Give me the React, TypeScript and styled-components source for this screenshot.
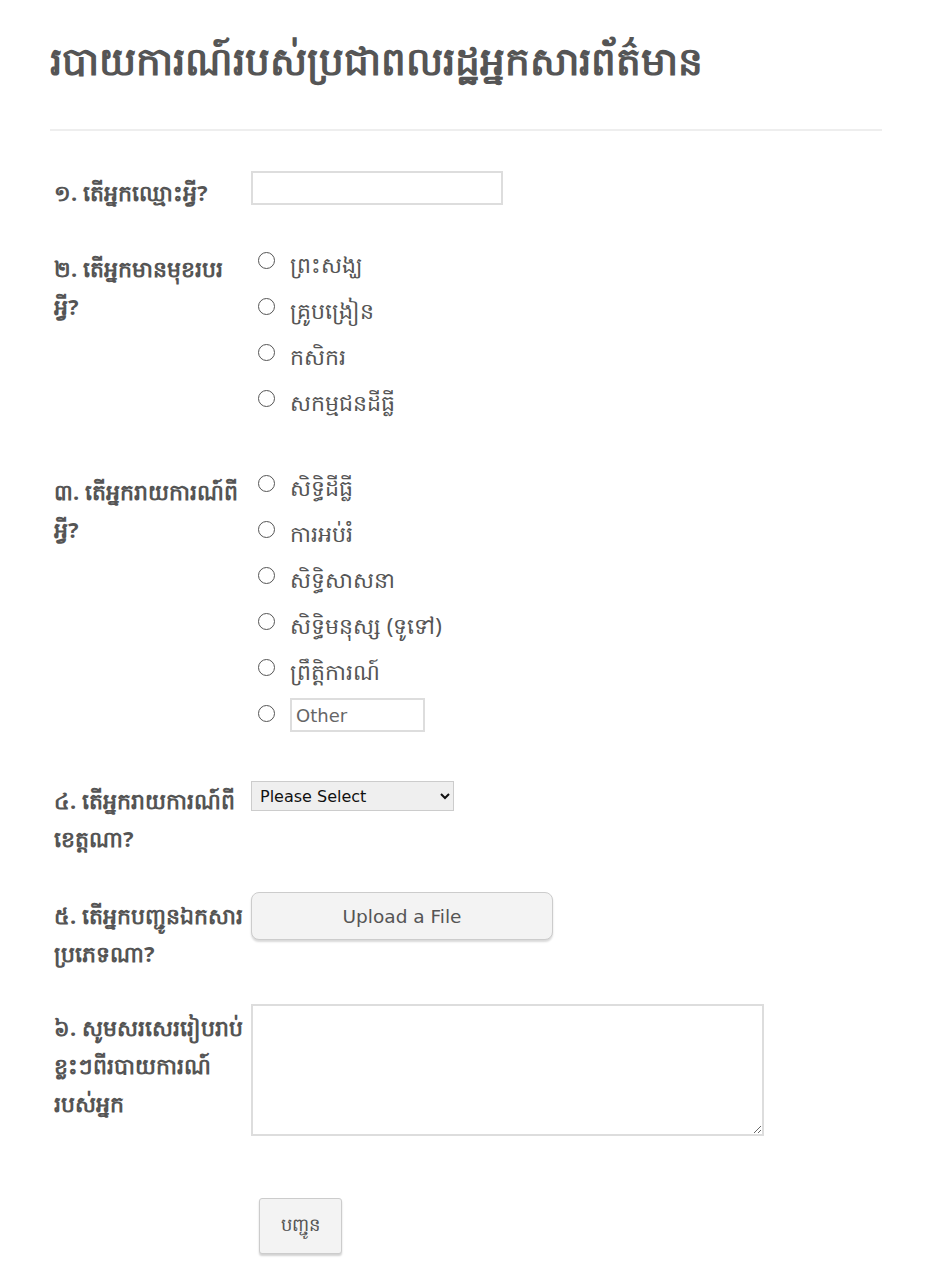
import React from "react";
import styled, { createGlobalStyle } from "styled-components";

const Global = createGlobalStyle`
  html, body { margin: 0; padding: 0; background: #fff; }
  body { font-family: "Noto Sans", "DejaVu Sans", sans-serif; color: #555; }
`;

const Page = styled.div`
  width: 832px;
  padding: 28px 0 40px 50px;
`;

const Title = styled.h1`
  margin: 0;
  font-size: 39px;
  font-weight: 700;
  line-height: 64px;
  color: #555;
`;

const Rule = styled.hr`
  border: 0;
  border-top: 2px solid #eee;
  margin: 37px 0 42px;
`;

const Row = styled.div<{ $gap: number }>`
  display: grid;
  grid-template-columns: 201px 1fr;
  align-items: start;
  margin-bottom: ${(p) => p.$gap}px;
`;

const Label = styled.div`
  font-size: 22px;
  font-weight: 700;
  line-height: 38px;
  color: #555;
  padding-left: 4px;
`;

const LabelLine = styled.span`
  display: block;
  white-space: nowrap;
`;

const TextInput = styled.input`
  box-sizing: border-box;
  width: 252px;
  height: 34px;
  border: 2px solid #ddd;
  background: #fff;
  margin-top: -2px;
`;

const Options = styled.div`
  display: flex;
  flex-direction: column;
  padding-left: 7px;
`;

const Option = styled.label`
  display: flex;
  align-items: flex-start;
  gap: 15px;
  height: 46px;
  font-size: 22px;
  color: #555;
  line-height: 30px;
  white-space: nowrap;
`;

const Radio = styled.span`
  box-sizing: border-box;
  width: 17px;
  height: 17px;
  border: 1.5px solid #555;
  border-radius: 50%;
  margin-top: 3px;
  flex: none;
`;

const OtherInput = styled.input`
  box-sizing: border-box;
  width: 135px;
  height: 34px;
  border: 2px solid #ddd;
  font-family: "DejaVu Sans", sans-serif;
  font-size: 18px;
  color: #666;
  padding: 2px 4px;
  margin-top: -4px;
  &::placeholder { color: #666; }
`;

const Select = styled.select`
  box-sizing: border-box;
  width: 203px;
  height: 30px;
  border: 1px solid #ccc;
  background: #efefef;
  font-family: "DejaVu Sans", sans-serif;
  font-size: 16px;
  color: #111;
  padding: 0 4px;
`;

const UploadButton = styled.button`
  width: 302px;
  height: 48px;
  margin-top: -4px;
  border: 1px solid #ccc;
  border-radius: 8px;
  background: #f3f3f3;
  box-shadow: 0 2px 2px rgba(0,0,0,0.15);
  font-family: "DejaVu Sans", sans-serif;
  font-size: 18.5px;
  color: #555;
`;

const TextArea = styled.textarea`
  box-sizing: border-box;
  width: 513px;
  height: 132px;
  margin-top: -4px;
  border: 2px solid #ddd;
  resize: both;
`;

const SubmitRow = styled.div`
  padding-left: 209px;
  margin-top: 62px;
`;

const SubmitButton = styled.button`
  width: 83px;
  height: 56px;
  border: 1px solid #ccc;
  border-radius: 3px;
  background: #f3f3f3;
  box-shadow: 0 2px 2px rgba(0,0,0,0.18);
  font-family: "Noto Sans", sans-serif;
  font-size: 18px;
  color: #555;
`;

const q2 = ["ព្រះសង្ឃ", "គ្រូបង្រៀន", "កសិករ", "សកម្មជនដីធ្លី"];
const q3 = ["សិទ្ធិដីធ្លី", "ការអប់រំ", "សិទ្ធិសាសនា", "សិទ្ធិមនុស្ស (ទូទៅ)", "ព្រឹត្តិការណ៍"];

const Lines = ({ lines }: { lines: string[] }) => (
  <Label>
    {lines.map((l) => (
      <LabelLine key={l}>{l}</LabelLine>
    ))}
  </Label>
);

export default function App() {
  return (
    <Page>
      <Global />
      <Title>របាយការណ៍របស់ប្រជាពលរដ្ឋអ្នកសារព័ត៌មាន</Title>
      <Rule />
      <Row $gap={38}>
        <Lines lines={["១. តើអ្នកឈ្មោះអ្វី?"]} />
        <TextInput />
      </Row>
      <Row $gap={39}>
        <Lines lines={["២. តើអ្នកមានមុខរបរ", "អ្វី?"]} />
        <Options>
          {q2.map((o) => (
            <Option key={o}><Radio />{o}</Option>
          ))}
        </Options>
      </Row>
      <Row $gap={33}>
        <Lines lines={["៣. តើអ្នករាយការណ៍ពី", "អ្វី?"]} />
        <Options>
          {q3.map((o) => (
            <Option key={o}><Radio />{o}</Option>
          ))}
          <Option><Radio /><OtherInput placeholder="Other" /></Option>
        </Options>
      </Row>
      <Row $gap={39}>
        <Lines lines={["៤. តើអ្នករាយការណ៍ពី", "ខេត្តណា?"]} />
        <Select><option>Please Select</option></Select>
      </Row>
      <Row $gap={36}>
        <Lines lines={["៥. តើអ្នកបញ្ជូនឯកសារ", "ប្រភេទណា?"]} />
        <UploadButton>Upload a File</UploadButton>
      </Row>
      <Row $gap={0}>
        <Lines lines={["៦. សូមសរសេររៀបរាប់", "ខ្លះៗពីរបាយការណ៍", "របស់អ្នក"]} />
        <TextArea />
      </Row>
      <SubmitRow>
        <SubmitButton>បញ្ជូន</SubmitButton>
      </SubmitRow>
    </Page>
  );
}
